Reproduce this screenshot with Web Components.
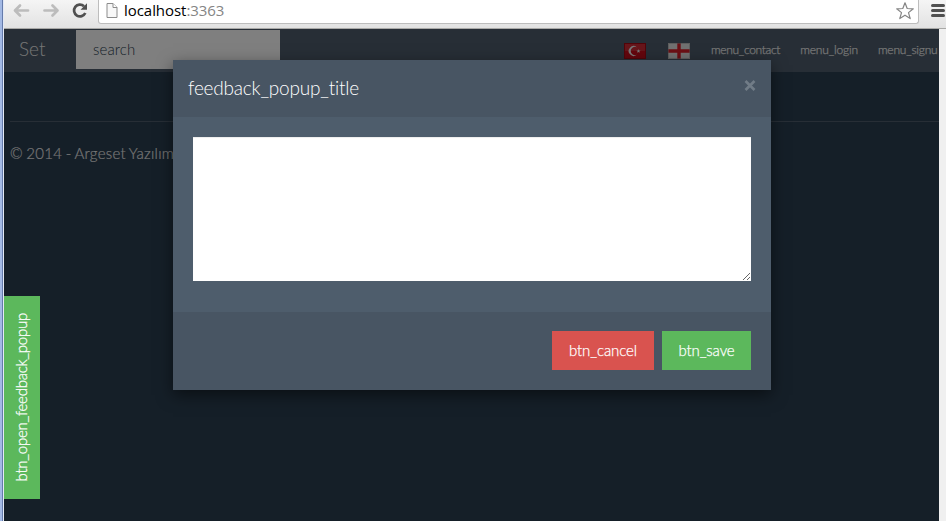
<!DOCTYPE html>
<html lang="en"><head><meta charset="utf-8"><title>Feedback</title>
<style>html,body{margin:0;width:946px;height:521px;overflow:hidden;background:#151f28}</style></head>
<body><app-window></app-window>
<script>
function define(name, html){
  const t=document.createElement('template'); t.innerHTML=html;
  customElements.define(name, class extends HTMLElement{
    constructor(){super();this.attachShadow({mode:'open'}).append(t.content.cloneNode(true));}
  });
}
define('browser-bar', `<style>
:host{display:flex;box-sizing:border-box;height:29px;border-bottom:1px solid #a9a9a7;background:linear-gradient(#f5f5f5,#e2e2e2);overflow:hidden}
.nav{flex:none;width:94px;height:28px}
.addr{box-sizing:border-box;width:821px;height:24px;background:#fff;border:1px solid #bdbdbd;border-top:0;border-radius:0 0 3px 3px;display:flex;align-items:flex-start}
.page{flex:none;width:12px;height:17px;margin:2px 0 0 7px}
.url{font:15px/20px "Open Sans",sans-serif;color:#000;margin-left:6px;width:120px;letter-spacing:-.05px;white-space:nowrap}
.url span{color:#858585}
.star{margin:1px 3px 0 auto;flex:none}
.menu{flex:none;margin-left:12px;height:28px}
</style>
<svg class="nav" viewBox="4 0 94 28"><g fill="none" stroke="#bcbcbc" stroke-width="2.7" stroke-linecap="round" stroke-linejoin="round"><path d="M28 10.5H15.5M20 5.5l-5 5 5 5"/><path d="M44.500 10.500H57M52.500 5.500l5 5-5 5"/></g><path d="M84 6.200A5.900 5.900 0 1 0 85.300 13" fill="none" stroke="#505050" stroke-width="2.700"/><path d="M87 3.200v6.500h-6.500z" fill="#505050"/></svg>
<div class="addr">
<svg class="page" viewBox="0 0 12 17"><path d="M1 1.500h6l4 4v10H1z" fill="#f8f8f8" stroke="#8c8c8c"/><path d="M7 1.500v4h4" fill="#fff" stroke="#8c8c8c"/></svg>
<div class="url">localhost<span>:3363</span></div>
<svg class="star" width="20" height="20" viewBox="0 0 20 20"><path d="M10 1.800l2.200 5.700 6.100.3-4.800 3.800 1.700 6L10 14.200l-5.200 3.400 1.700-6L1.700 7.800l6.100-.3z" fill="#fff" stroke="#858585" stroke-width="1.200" stroke-linejoin="round"/></svg>
</div>
<svg class="menu" width="15" height="28" viewBox="0 0 15 28"><path d="M1.500 5.500h11M1.500 10.500h11M1.500 15.500h11" stroke="#505050" stroke-width="3" stroke-linecap="round"/></svg>`);
define('nav-bar', `<style>
:host{display:flex;height:43px;background:#4e5d6c;color:#ebebeb;font-family:Lato,sans-serif;font-weight:300;overflow:hidden;white-space:nowrap}
.brand{flex:none;font-size:19px;line-height:40px;width:57px;margin-left:15px}
.search{flex:none;box-sizing:border-box;width:204px;height:39px;margin-top:1px;padding-left:17px;background:#fff;color:#2b3e50;font-size:15px;line-height:39px;letter-spacing:.1px}
.links{flex:none;display:flex;margin-left:344px;font-size:12px;line-height:42px;-webkit-text-stroke:.25px currentColor}
.links span{margin-right:20px;flex:none;letter-spacing:-.32px}
.links span + span{letter-spacing:-.15px}
.links span:last-child{margin-right:0;letter-spacing:-.2px}
svg{flex:none;margin:14px 22px 0 0}
</style>
<div class="brand">Set</div><div class="search">search</div>
<div class="links">
<svg width="22" height="16" viewBox="0 0 22 16"><rect width="22" height="16" fill="#c80d1a"/><rect x=".5" y=".5" width="21" height="15" fill="none" stroke="#a50a14"/><rect x="1" y="1" width="20" height="7" fill="#fff" opacity=".13"/><path d="M12.700 4.200a4.900 4.900 0 1 0 0 7.600 4.200 4.200 0 1 1 0-7.600z" fill="#eee"/><path d="M14.500 6l.5 1.400 1.500.1-1.200.9.4 1.400-1.200-.8-1.300.8.4-1.400-1.100-.9 1.500-.1z" fill="#eee"/></svg>
<svg width="22" height="16" viewBox="0 0 22 16" style="margin-right:21px"><rect width="22" height="16" fill="#e2e2e2"/><path d="M11 0v16M0 8h22" stroke="#d8202a" stroke-width="3.400"/><rect x=".5" y=".5" width="21" height="15" fill="none" stroke="#999" opacity=".5"/></svg>
<span>menu_contact</span><span>menu_login</span><span>menu_signu</span></div>`);
define('page-footer', `<style>
:host{display:block;margin:49px 0 0 6px;border-top:1px solid #4e5d6c;padding-top:20px;font:300 15px/22px Lato,sans-serif;letter-spacing:.3px;word-spacing:-1px;color:#ebebeb;-webkit-text-stroke:.15px currentColor}
</style>© 2014 - Argeset Yazılım`);
define('flat-button', `<style>
:host{display:block;box-sizing:border-box;height:39px;font:300 15px/39px Lato,sans-serif;letter-spacing:-.1px;color:#fff;text-align:center;white-space:nowrap;-webkit-text-stroke:.25px currentColor}
</style><slot></slot>`);
define('feedback-dialog', `<style>
:host{display:flex;flex-direction:column;box-sizing:border-box;width:598px;height:330px;background:#4e5d6c;box-shadow:0 5px 15px rgba(0,0,0,.5);font-family:Lato,sans-serif;font-weight:300;color:#ebebeb}
header{display:flex;justify-content:space-between;box-sizing:border-box;height:57px;background:#485563;padding:0 15px;font-size:19px;line-height:56px;letter-spacing:-.2px;color:#fff}
header svg{margin-top:20px}
main{box-sizing:border-box;height:195px;padding:20px}
textarea{display:block;box-sizing:border-box;width:558px;height:144px;border:0;margin:0;background:#fff;resize:vertical;box-shadow:inset 0 1px 1px rgba(0,0,0,.075)}
footer{display:flex;justify-content:flex-end;gap:8px;box-sizing:border-box;height:78px;background:#485563;padding:19px 20px 0}
.cancel{width:102px;background:#d9534f}.save{width:89px;background:#5cb85c}
</style>
<header><span>feedback_popup_title</span><svg width="12" height="12" viewBox="0 0 12 12"><path d="M1.500 1l9 9M10.500 1l-9 9" stroke="#717c87" stroke-width="2.600"/></svg></header>
<main><textarea></textarea></main>
<footer><flat-button class="cancel">btn_cancel</flat-button><flat-button class="save">btn_save</flat-button></footer>`);
define('feedback-tab', `<style>
:host{display:flex;align-items:center;justify-content:center;box-sizing:border-box;width:36px;height:203px;padding-right:2px;background:#5cb85c;color:#fff;font:300 15px/20px Lato,sans-serif;letter-spacing:-.26px;-webkit-text-stroke:.25px currentColor}
span{writing-mode:vertical-rl;transform:rotate(180deg);white-space:nowrap}
</style><span>btn_open_feedback_popup</span>`);
define('app-window', `<style>
:host{display:grid;position:relative;grid-template-columns:4px 1fr;width:946px;height:521px;overflow:hidden}
.edge{background:linear-gradient(90deg,#a3b9e4 0 2px,#657bab 2px 3px,#e3e9f5 3px)}
.content{display:grid;grid-template:29px 1fr/935px 7px;min-width:0}
browser-bar{grid-column:1/3}
.page{background:#2b3e50;overflow:hidden;min-width:0}
.scroll{background:#f0f0f0}
.shade{position:absolute;left:4px;top:29px;width:935px;height:492px;background:rgba(0,0,0,.5)}
feedback-dialog{position:absolute;left:173px;top:60px}
feedback-tab{position:absolute;left:4px;top:296px}
</style>
<div class="edge"></div><div class="content"><browser-bar></browser-bar><div class="page"><nav-bar></nav-bar><page-footer></page-footer></div><div class="scroll"></div></div>
<div class="shade"></div><feedback-tab></feedback-tab><feedback-dialog></feedback-dialog>`);
</script></body></html>
